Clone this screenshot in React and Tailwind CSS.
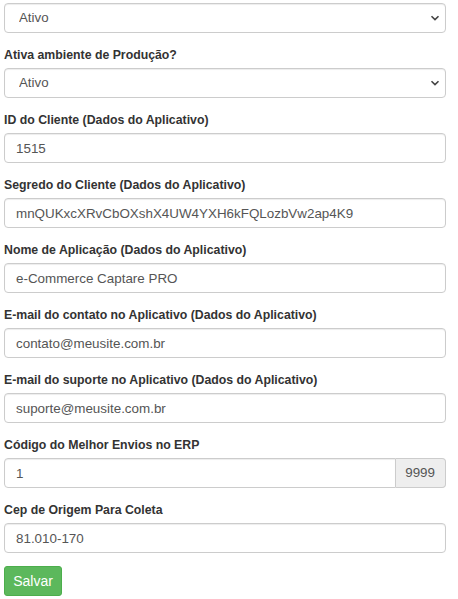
import React from "react";

const font = { fontFamily: '"Liberation Sans", Arial, sans-serif' };

function Label({ children }) {
  return (
    <label className="block text-[12.3px] leading-[15px] font-bold text-[#333] mb-[5px]">
      {children}
    </label>
  );
}

function Select({ value }) {
  return (
    <div className="relative w-[442px] h-[30px]">
      <select
        defaultValue={value}
        className="appearance-none w-full h-full border border-[#ccc] rounded-[4px] bg-white pl-[14px] pr-8 text-[13.3px] text-[#555] shadow-[inset_0_1px_1px_rgba(0,0,0,0.075)] outline-none"
        style={font}
      >
        <option>{value}</option>
        <option>Inativo</option>
      </select>
      <svg
        className="absolute right-[6px] top-[11px] pointer-events-none"
        width="10"
        height="8"
        viewBox="0 0 10 8"
      >
        <path d="M1.5 2.2 L5 5.6 L8.5 2.2" fill="none" stroke="#444" strokeWidth="1.6" />
      </svg>
    </div>
  );
}

function Input({ value }) {
  return (
    <input
      defaultValue={value}
      className="block w-[442px] h-[30px] border border-[#ccc] rounded-[4px] bg-white px-[11px] text-[13.4px] text-[#555] shadow-[inset_0_1px_1px_rgba(0,0,0,0.075)] outline-none"
      style={font}
    />
  );
}

function Group({ label, children, last }) {
  return (
    <div className={last ? "" : "mb-[15px]"}>
      {label && <Label>{label}</Label>}
      {children}
    </div>
  );
}

export default function App() {
  return (
    <div className="bg-white w-[458px] h-[599px] pl-[4px] pt-[3px]" style={font}>
      <Group>
        <Select value="Ativo" />
      </Group>
      <Group label="Ativa ambiente de Produção?">
        <Select value="Ativo" />
      </Group>
      <Group label="ID do Cliente (Dados do Aplicativo)">
        <Input value="1515" />
      </Group>
      <Group label="Segredo do Cliente (Dados do Aplicativo)">
        <Input value="mnQUKxcXRvCbOXshX4UW4YXH6kFQLozbVw2ap4K9" />
      </Group>
      <Group label="Nome de Aplicação (Dados do Aplicativo)">
        <Input value="e-Commerce Captare PRO" />
      </Group>
      <Group label="E-mail do contato no Aplicativo (Dados do Aplicativo)">
        <Input value="contato@meusite.com.br" />
      </Group>
      <Group label="E-mail do suporte no Aplicativo (Dados do Aplicativo)">
        <Input value="suporte@meusite.com.br" />
      </Group>
      <Group label="Código do Melhor Envios no ERP">
        <div className="flex w-[442px] h-[30px]">
          <input
            defaultValue="1"
            className="flex-1 min-w-0 h-full border border-[#ccc] rounded-l-[4px] bg-white px-[11px] text-[13.4px] text-[#555] shadow-[inset_0_1px_1px_rgba(0,0,0,0.075)] outline-none"
            style={font}
          />
          <span className="w-[50px] h-full flex items-center justify-end pr-[10px] border border-l-0 border-[#ccc] rounded-r-[4px] bg-[#eee] text-[13.4px] text-[#555]">
            9999
          </span>
        </div>
      </Group>
      <Group label="Cep de Origem Para Coleta" last>
        <Input value="81.010-170" />
      </Group>
      <button
        className="mt-[13px] w-[58px] h-[30px] rounded-[3px] bg-[#5cb85c] border border-[#4cae4c] text-white text-[14px] leading-none"
        style={font}
      >
        Salvar
      </button>
    </div>
  );
}
